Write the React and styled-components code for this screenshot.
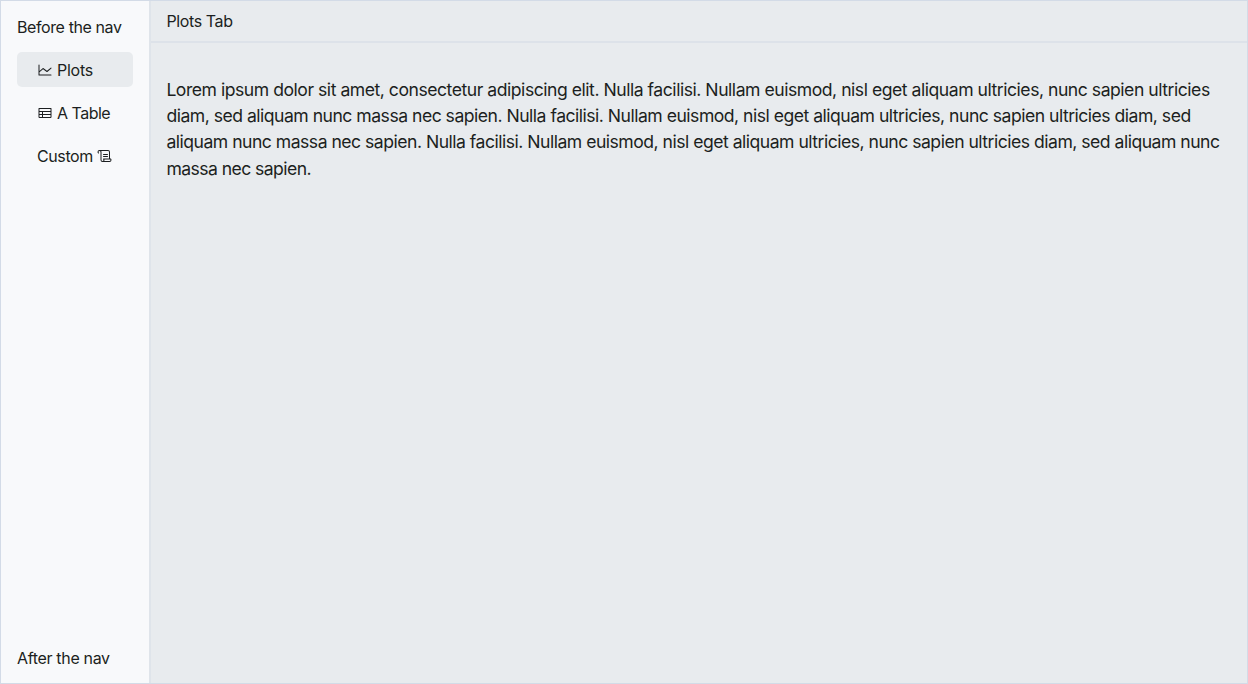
import React from "react";
import styled, { createGlobalStyle } from "styled-components";
import { PiChartLine, PiTable, PiScroll } from "react-icons/pi";

const GlobalStyle = createGlobalStyle`
  * { box-sizing: border-box; }
  body { margin: 0; }
`;

const Shell = styled.div`
  display: flex;
  width: 100vw;
  height: 100vh;
  border: 1px solid #d3dbe7;
  background: #e8ebee;
  color: #1c1f21;
  font-family: Inter, "Liberation Sans", sans-serif;
  font-size: 16px;
  letter-spacing: -0.4px;
`;

const Sidebar = styled.aside`
  display: flex;
  flex-direction: column;
  flex: none;
  width: 150px;
  padding: 16px 16px 15px;
  background: #f8f9fb;
  border-right: 2px solid #dfe4ea;
`;

const SideText = styled.div`
  line-height: 20px;
  white-space: nowrap;
  letter-spacing: ${({ $tracking }) => $tracking ?? -0.4}px;
`;

const NavList = styled.nav`
  display: flex;
  flex: 1;
  flex-direction: column;
  gap: 8px;
  margin-top: 15px;
`;

const NavItem = styled.a`
  display: flex;
  align-items: center;
  gap: 4px;
  height: 35px;
  padding: 1px 20px 0;
  border-radius: 5px;
  white-space: nowrap;
  letter-spacing: ${({ $tracking }) => $tracking ?? -0.4}px;
  background: ${({ $active }) => ($active ? "#e8ebee" : "transparent")};

  svg {
    flex: none;
    width: 16px;
    height: 16px;
  }
`;

const Main = styled.main`
  flex: 1;
  min-width: 0;
`;

const Header = styled.header`
  height: 42px;
  padding: 10px 15.5px;
  line-height: 20px;
  border-bottom: 2px solid #dde2e9;
`;

const Content = styled.p`
  margin: 0;
  padding: 33.55px 15.4px;
  font-size: 17.6px;
  line-height: 26.4px;
`;

const Line = styled.span`
  display: block;
  white-space: nowrap;
  letter-spacing: ${({ $tracking }) => $tracking}px;
`;

const lines = [
  { tracking: -0.476, text: "Lorem ipsum dolor sit amet, consectetur adipiscing elit. Nulla facilisi. Nullam euismod, nisl eget aliquam ultricies, nunc sapien ultricies" },
  { tracking: -0.507, text: "diam, sed aliquam nunc massa nec sapien. Nulla facilisi. Nullam euismod, nisl eget aliquam ultricies, nunc sapien ultricies diam, sed" },
  { tracking: -0.507, text: "aliquam nunc massa nec sapien. Nulla facilisi. Nullam euismod, nisl eget aliquam ultricies, nunc sapien ultricies diam, sed aliquam nunc" },
  { tracking: -0.57, text: "massa nec sapien." },
];

export default function App() {
  return (
    <>
      <GlobalStyle />
      <Shell>
        <Sidebar>
          <SideText>Before the nav</SideText>
          <NavList>
            <NavItem $active $tracking={-0.25}><PiChartLine /><span>Plots</span></NavItem>
            <NavItem $tracking={-0.5}><PiTable /><span>A Table</span></NavItem>
            <NavItem><span>Custom</span><PiScroll /></NavItem>
          </NavList>
          <SideText $tracking={-0.33}>After the nav</SideText>
        </Sidebar>
        <Main>
          <Header>Plots Tab</Header>
          <Content>
            {lines.map(({ text, tracking }) => <Line key={text} $tracking={tracking}>{text}</Line>)}
          </Content>
        </Main>
      </Shell>
    </>
  );
}
